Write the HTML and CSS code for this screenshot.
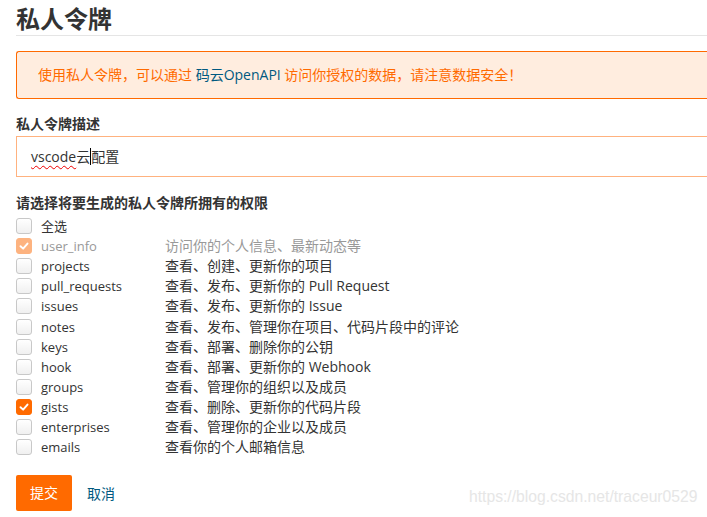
FILE: index.html
```html
<!DOCTYPE html>
<html lang="zh">
<head>
<meta charset="utf-8">
<link rel="stylesheet" href="styles.css">
</head>
<body>
<div class="page">
  <h1 class="title">私人令牌</h1>
  <div class="alert">使用私人令牌，可以通过 <span class="alert-link">码云OpenAPI</span> 访问你授权的数据，请注意数据安全！</div>
  <div class="field">
    <div class="label">私人令牌描述</div>
    <div class="input"><span class="spell">vscode</span>云<span class="caret"></span>配置</div>
  </div>
  <div class="field perms">
    <div class="label">请选择将要生成的私人令牌所拥有的权限</div>
    <ul class="list">
      <li class="row"><span class="box"></span><span class="name">全选</span></li>
      <li class="row disabled"><span class="box checked"><svg viewBox="0 0 16 16"><path d="M4 8.2 L7 11 L12 5.2" fill="none" stroke="#fff" stroke-width="2.2" stroke-linecap="round" stroke-linejoin="round"/></svg></span><span class="name">user_info</span><span class="desc">访问你的个人信息、最新动态等</span></li>
      <li class="row"><span class="box"></span><span class="name">projects</span><span class="desc">查看、创建、更新你的项目</span></li>
      <li class="row"><span class="box"></span><span class="name">pull_requests</span><span class="desc">查看、发布、更新你的 Pull Request</span></li>
      <li class="row"><span class="box"></span><span class="name">issues</span><span class="desc">查看、发布、更新你的 Issue</span></li>
      <li class="row"><span class="box"></span><span class="name">notes</span><span class="desc">查看、发布、管理你在项目、代码片段中的评论</span></li>
      <li class="row"><span class="box"></span><span class="name">keys</span><span class="desc">查看、部署、删除你的公钥</span></li>
      <li class="row"><span class="box"></span><span class="name">hook</span><span class="desc">查看、部署、更新你的 Webhook</span></li>
      <li class="row"><span class="box"></span><span class="name">groups</span><span class="desc">查看、管理你的组织以及成员</span></li>
      <li class="row"><span class="box checked"><svg viewBox="0 0 16 16"><path d="M4 8.2 L7 11 L12 5.2" fill="none" stroke="#fff" stroke-width="2.2" stroke-linecap="round" stroke-linejoin="round"/></svg></span><span class="name">gists</span><span class="desc">查看、删除、更新你的代码片段</span></li>
      <li class="row"><span class="box"></span><span class="name">enterprises</span><span class="desc">查看、管理你的企业以及成员</span></li>
      <li class="row"><span class="box"></span><span class="name">emails</span><span class="desc">查看你的个人邮箱信息</span></li>
    </ul>
  </div>
  <div class="actions">
    <span class="btn">提交</span>
    <span class="cancel">取消</span>
  </div>
</div>
<div class="watermark">https://blog.csdn.net/traceur0529</div>
</body>
</html>
```
FILE: styles.css
```css
html, body {
  margin: 0;
  padding: 0;
  overflow: hidden;
  background: #fff;
}
body {
  font-family: "Open Sans", "Noto Sans CJK SC", sans-serif;
  color: #333;
  font-size: 14px;
  position: relative;
  height: 517px;
}
.page {
  padding-left: 16px;
}
.title {
  margin: 0;
  padding-top: 2px;
  height: 33px;
  font-size: 24px;
  line-height: 32px;
  font-weight: 700;
  color: #333;
  border-bottom: 1px solid #e5e5e5;
  font-family: "Noto Sans CJK SC", sans-serif;
}
.alert {
  margin-top: 15px;
  height: 46px;
  line-height: 46px;
  border: 1px solid #ff6a00;
  border-right: none;
  border-radius: 3px 0 0 3px;
  background: #ffeddf;
  color: #ff6a00;
  padding-left: 21px;
  font-size: 14px;
}
.alert-link {
  color: #005980;
}
.field {
  margin-top: 14px;
}
.label {
  font-weight: 700;
  font-size: 14px;
  line-height: 20px;
  color: #333;
  font-family: "Noto Sans CJK SC", sans-serif;
}
.input {
  margin-top: 3px;
  height: 39px;
  line-height: 39px;
  border: 1px solid #ffb27f;
  border-right: none;
  padding-left: 14px;
  font-size: 14px;
  color: #333;
}
.spell {
  text-decoration: underline wavy #e00;
  text-decoration-thickness: 1px;
  text-underline-offset: 3px;
}
.caret {
  display: inline-block;
  width: 1px;
  height: 17px;
  background: #000;
  vertical-align: -3px;
}
.perms {
  margin-top: 15px;
}
.list {
  list-style: none;
  margin: 4px 0 0;
  padding: 0;
}
.row {
  display: flex;
  align-items: center;
  height: 20.1px;
  font-size: 13px;
  line-height: 20px;
  color: #333;
}
.box {
  box-sizing: border-box;
  width: 16px;
  height: 16px;
  border: 1px solid #c8c8c8;
  border-radius: 3px;
  background: linear-gradient(#fff, #f0f0f0);
  display: flex;
  align-items: center;
  justify-content: center;
  flex-shrink: 0;
}
.box svg {
  width: 16px;
  height: 16px;
}
.box.checked {
  background: #ff6a00;
  border-color: #ff6a00;
}
.name {
  margin-left: 9px;
  width: 124px;
  font-size: 13px;
}
.desc {
  font-size: 14px;
}
.disabled .box.checked {
  background: #fdb380;
  border-color: #fdb380;
}
.disabled .name, .disabled .desc {
  color: #999;
}
.actions {
  margin-top: 18px;
  display: flex;
  align-items: center;
}
.btn {
  width: 56px;
  height: 36px;
  line-height: 36px;
  text-align: center;
  background: #ff6a00;
  color: #fff;
  border-radius: 2px;
  font-size: 14px;
}
.cancel {
  margin-left: 15px;
  color: #005980;
  font-size: 14px;
}
.watermark {
  position: absolute;
  left: 469px;
  top: 488px;
  font-family: "Liberation Sans", Arial, sans-serif;
  font-size: 15.7px;
  color: #e6e6e6;
}
```
